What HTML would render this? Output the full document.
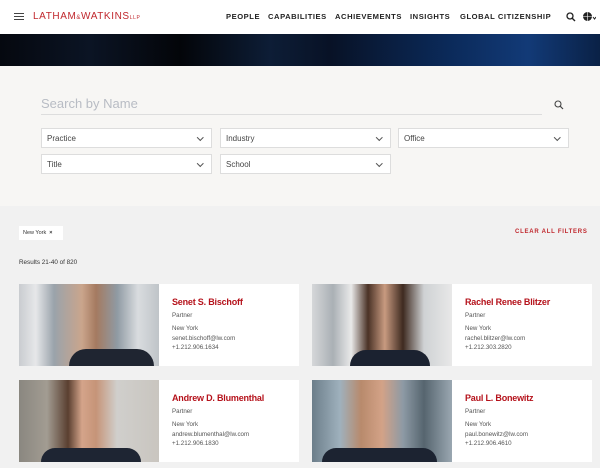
<!DOCTYPE html>
<html><head><meta charset="utf-8"><style>
*{margin:0;padding:0;box-sizing:border-box}
body{width:600px;height:468px;overflow:hidden;background:#f1f1f1;font-family:"Liberation Sans",Arial,sans-serif;position:relative}
.a{position:absolute}
.hdr{left:0;top:0;width:600px;height:34px;background:#fff}
.nav{top:12px;font-size:7.6px;font-weight:bold;letter-spacing:.55px;color:#222;white-space:nowrap}
.ban{left:0;top:34px;width:600px;height:32px;background:linear-gradient(90deg,#05080f 0%,#0b1424 15%,#030509 30%,#0d1d36 45%,#081226 55%,#0b2a5a 75%,#123a77 88%,#0a2146 100%)}
.filt{left:0;top:66px;width:600px;height:140px;background:#f7f6f4}
.sel{height:20px;border:1px solid #ddd;background:#fff;font-size:8px;color:#444;padding:5px 0 0 5px}
.sel:after{content:"";position:absolute;right:9px;top:6px;width:3.5px;height:3.5px;border-right:1.2px solid #555;border-bottom:1.2px solid #555;transform:rotate(45deg)}
.card{width:280px;height:82px;background:#fff}
.ph{left:0;top:0;width:140px;height:82px}
.nm{left:153px;top:13px;font-size:9px;font-weight:bold;color:#b5121b;letter-spacing:-.2px;white-space:nowrap}
.t{left:153px;font-size:6.2px;color:#555;white-space:nowrap}
</style></head><body>
<div class="a hdr"></div>
<div class="a" style="left:14px;top:13px;width:10px;height:1.3px;background:#444;box-shadow:0 3px 0 #444,0 6px 0 #444"></div>
<div class="a" style="left:33px;top:11px;font-size:10px;color:#c0272d;letter-spacing:.6px;white-space:nowrap">LATHAM<span style="font-size:6px">&amp;</span>WATKINS<span style="font-size:5px">LLP</span></div>
<div class="a nav" style="left:226px">PEOPLE</div>
<div class="a nav" style="left:268px">CAPABILITIES</div>
<div class="a nav" style="left:335px">ACHIEVEMENTS</div>
<div class="a nav" style="left:410px">INSIGHTS</div>
<div class="a nav" style="left:460px">GLOBAL CITIZENSHIP</div>
<svg class="a" style="left:566px;top:12px" width="10" height="10"><circle cx="4" cy="4" r="3" fill="none" stroke="#222" stroke-width="1.3"/><path d="M6.2 6.2L9 9" stroke="#222" stroke-width="1.4"/></svg>
<svg class="a" style="left:582px;top:11px" width="14" height="11"><circle cx="5.5" cy="5.5" r="4.5" fill="#222"/><path d="M1 5.5h9M5.5 1v9" stroke="#fff" stroke-width=".6"/><path d="M11 6l1.5 2 1.5-2" stroke="#222" fill="none"/></svg>
<div class="a ban"></div>
<div class="a filt"></div>
<div class="a" style="left:41px;top:96px;font-size:13px;color:#b8bcc4">Search by Name</div>
<div class="a" style="left:41px;top:114px;width:501px;height:1px;background:#ddd"></div>
<svg class="a" style="left:554px;top:100px" width="10" height="10"><circle cx="4" cy="4" r="3" fill="none" stroke="#444" stroke-width="1.1"/><path d="M6.2 6.2L9 9" stroke="#444" stroke-width="1.2"/></svg>
<div class="a sel" style="left:41px;top:128px;width:171px">Practice</div>
<div class="a sel" style="left:220px;top:128px;width:171px">Industry</div>
<div class="a sel" style="left:398px;top:128px;width:171px">Office</div>
<div class="a sel" style="left:41px;top:154px;width:171px">Title</div>
<div class="a sel" style="left:220px;top:154px;width:171px">School</div>
<div class="a" style="left:19px;top:226px;width:44px;height:14px;background:#fff;font-size:5.5px;color:#333;padding:4px 0 0 4px;white-space:nowrap">New York &nbsp;<b>×</b></div>
<div class="a" style="left:515px;top:229px;font-size:6px;font-weight:bold;color:#c0272d;letter-spacing:.75px;white-space:nowrap">CLEAR ALL FILTERS</div>
<div class="a" style="left:19px;top:259px;font-size:6.3px;color:#333">Results 21-40 of 820</div>

<div class="a card" style="left:19px;top:284px"><div class="a ph" style="background:linear-gradient(90deg,#c9ccd0 0%,#e6e7e9 12%,#9aa3ab 25%,#caa58c 45%,#a57a60 55%,#8f9aa3 70%,#d9dcdf 85%,#bfc4c8 100%)"><div class="a" style="left:50px;top:65px;width:85px;height:17px;background:#1f2531;border-radius:20px 20px 0 0"></div></div>
<div class="a nm">Senet S. Bischoff</div><div class="a t" style="top:28px">Partner</div><div class="a t" style="top:41px">New York</div><div class="a t" style="top:51px">senet.bischoff@lw.com</div><div class="a t" style="top:60px">+1.212.906.1634</div></div>

<div class="a card" style="left:312px;top:284px"><div class="a ph" style="background:linear-gradient(90deg,#d5d7d9 0%,#aab0b5 15%,#e9e9e9 28%,#4a3226 40%,#c89a80 52%,#3e2a20 65%,#cfd2d4 80%,#e8e8e8 100%)"><div class="a" style="left:38px;top:66px;width:80px;height:16px;background:#1b2230;border-radius:20px 20px 0 0"></div></div>
<div class="a nm">Rachel Renee Blitzer</div><div class="a t" style="top:28px">Partner</div><div class="a t" style="top:41px">New York</div><div class="a t" style="top:51px">rachel.blitzer@lw.com</div><div class="a t" style="top:60px">+1.212.303.2820</div></div>

<div class="a card" style="left:19px;top:380px"><div class="a ph" style="background:linear-gradient(90deg,#8a8780 0%,#a29c92 20%,#5a3f30 35%,#d4a48a 45%,#c69478 55%,#d0cfcc 70%,#c9c5bf 100%)"><div class="a" style="left:22px;top:68px;width:100px;height:14px;background:#1e2533;border-radius:20px 20px 0 0"></div></div>
<div class="a nm">Andrew D. Blumenthal</div><div class="a t" style="top:28px">Partner</div><div class="a t" style="top:41px">New York</div><div class="a t" style="top:51px">andrew.blumenthal@lw.com</div><div class="a t" style="top:60px">+1.212.906.1830</div></div>

<div class="a card" style="left:312px;top:380px"><div class="a ph" style="background:linear-gradient(90deg,#6c7e8a 0%,#9fb1bd 20%,#b88a6c 35%,#d3a287 50%,#8d9aa5 65%,#56656f 80%,#9aa7b1 100%)"><div class="a" style="left:10px;top:68px;width:115px;height:14px;background:#1c2331;border-radius:20px 20px 0 0"></div></div>
<div class="a nm">Paul L. Bonewitz</div><div class="a t" style="top:28px">Partner</div><div class="a t" style="top:41px">New York</div><div class="a t" style="top:51px">paul.bonewitz@lw.com</div><div class="a t" style="top:60px">+1.212.906.4610</div></div>
</body></html>
